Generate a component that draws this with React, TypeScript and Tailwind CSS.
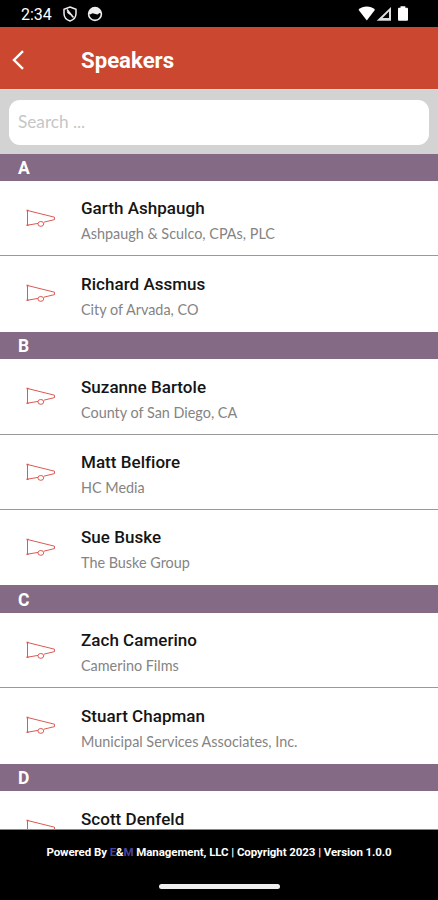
interface Speaker {
  name: string;
  company: string;
}

interface SpeakerGroup {
  letter: string;
  speakers: Speaker[];
}

const speakerGroups: SpeakerGroup[] = [
  {
    letter: 'A',
    speakers: [
      { name: 'Garth Ashpaugh', company: 'Ashpaugh & Sculco, CPAs, PLC' },
      { name: 'Richard Assmus', company: 'City of Arvada, CO' },
    ],
  },
  {
    letter: 'B',
    speakers: [
      { name: 'Suzanne Bartole', company: 'County of San Diego, CA' },
      { name: 'Matt Belfiore', company: 'HC Media' },
      { name: 'Sue Buske', company: 'The Buske Group' },
    ],
  },
  {
    letter: 'C',
    speakers: [
      { name: 'Zach Camerino', company: 'Camerino Films' },
      { name: 'Stuart Chapman', company: 'Municipal Services Associates, Inc.' },
    ],
  },
  {
    letter: 'D',
    speakers: [{ name: 'Scott Denfeld', company: '' }],
  },
];

function MegaphoneIcon() {
  return (
    <svg width="30" height="18" viewBox="0 0 30 18" fill="none" stroke="#dc5a54" strokeWidth="1" className="shrink-0">
      <path d="M1.5 1.2V16.8M1.5 1.5L28.5 8.2V10.6L17.8 13.2M12 14.4L1.5 16.2" />
      <ellipse cx="14.8" cy="14.9" rx="2.9" ry="2.4" />
      <path d="M0.5 1.5H2.5M0.5 16.3H2.5" strokeWidth="1.4" />
    </svg>
  );
}

function StatusBar() {
  return (
    <div className="flex h-[27px] shrink-0 items-center bg-black pl-[21px] pr-[29px] text-white">
      <span className="w-[42px] pt-[2px] text-[16px] leading-none">2:34</span>
      <svg width="14" height="16" viewBox="0 0 14 16" fill="none" stroke="#eee" strokeWidth="1.5">
        <path d="M7 1L13 3.2V7.5C13 11.2 10.5 13.8 7 15C3.5 13.8 1 11.2 1 7.5V3.2Z" />
        <path d="M4 3.5L10.5 11.5M4.5 5.5C4.5 7.8 9.5 7.8 9.5 11" />
      </svg>
      <svg width="16" height="16" viewBox="0 0 16 16" className="ml-[10px]">
        <circle cx="8" cy="8" r="6.4" fill="none" stroke="#eee" strokeWidth="1.6" />
        <path d="M1.5 7.5C2 0 14 0 14.5 7.5L12.5 7L10.5 8.5L5.5 7.2L3 8.5Z" fill="#eee" />
      </svg>
      <svg width="51" height="17" viewBox="0 0 51 17" className="ml-auto" fill="#fff">
        <path d="M0.5 4.8C5 0.5 12.5 0.5 17 4.8L8.8 15.6Z" />
        <path d="M33 2V15.8H18.7ZM31 6.6L24.5 13H31Z" fillRule="evenodd" fill="#ddd" />
        <path d="M42.5 1.3H47.3V2.8H48.8C49.5 2.8 50 3.3 50 4V14.5C50 15.3 49.5 15.8 48.8 15.8H41.2C40.5 15.8 40 15.3 40 14.5V4C40 3.3 40.5 2.8 41.2 2.8H42.5Z" />
      </svg>
    </div>
  );
}

function SpeakerRow({ speaker }: { speaker: Speaker }) {
  return (
    <li className="flex h-[75.4px] items-start border-b border-[#999] bg-white pl-[26px] last:border-b-0">
      <div className="w-[55px] shrink-0 pt-[28px]">
        <MegaphoneIcon />
      </div>
      <div className="whitespace-nowrap pt-[17.4px]">
        <div className="text-[17px] font-medium leading-[20px] tracking-[0.03px] text-[#151515]">{speaker.name}</div>
        <div className="mt-[7px] font-['Lato',sans-serif] text-[14.4px] leading-[18px] text-[#848484]">
          {speaker.company}
        </div>
      </div>
    </li>
  );
}

export default function App() {
  return (
    <div className="flex h-[900px] w-[438px] flex-col overflow-hidden bg-white font-['Roboto',sans-serif]">
      <StatusBar />

      {/* Header */}
      <header className="flex h-[62px] shrink-0 items-center bg-[#cb4730] pl-[12px] pt-[4px] text-white">
        <svg width="13" height="20" viewBox="0 0 13 20" fill="none" stroke="#fff" strokeWidth="2.4">
          <path d="M11 1.2L2 10L11 18.8" />
        </svg>
        <h1 className="ml-[56px] text-[22.2px] font-bold leading-none">Speakers</h1>
      </header>

      {/* Search */}
      <div className="h-[64.5px] shrink-0 border-t border-[#e6dcda] bg-[#d3d3d3] px-[9px] pt-[9.5px]">
        <input
          type="text"
          placeholder="Search ..."
          className="block h-[45px] w-full rounded-[11px] bg-white px-[9px] pb-[2px] font-['Lato',sans-serif] text-[17.2px] outline-none placeholder:text-[#c6c6c6]"
        />
      </div>

      {/* Speakers list */}
      <main className="min-h-0 flex-1 overflow-hidden">
        {speakerGroups.map((group) => (
          <section key={group.letter}>
            <h2 className="flex h-[27.5px] items-center bg-[#856a85] pl-[18px] pt-[3px] text-[17.5px] font-bold leading-none text-white">
              {group.letter}
            </h2>
            <ul>
              {group.speakers.map((speaker) => (
                <SpeakerRow key={speaker.name} speaker={speaker} />
              ))}
            </ul>
          </section>
        ))}
      </main>

      {/* Footer */}
      <footer className="flex h-[71px] shrink-0 flex-col items-center border-t border-[#888] bg-black pt-[15px] text-white">
        <p className="whitespace-nowrap text-[11.5px] font-bold leading-[14px] tracking-[-0.08px]">
          Powered By <span className="text-[#4a44a0]">E</span>&amp;<span className="text-[#4a44a0]">M</span> Management,
          LLC | Copyright 2023 | Version 1.0.0
        </p>
        <div className="mt-[25px] h-[5px] w-[121px] rounded-full bg-[#eee]" />
      </footer>
    </div>
  );
}
